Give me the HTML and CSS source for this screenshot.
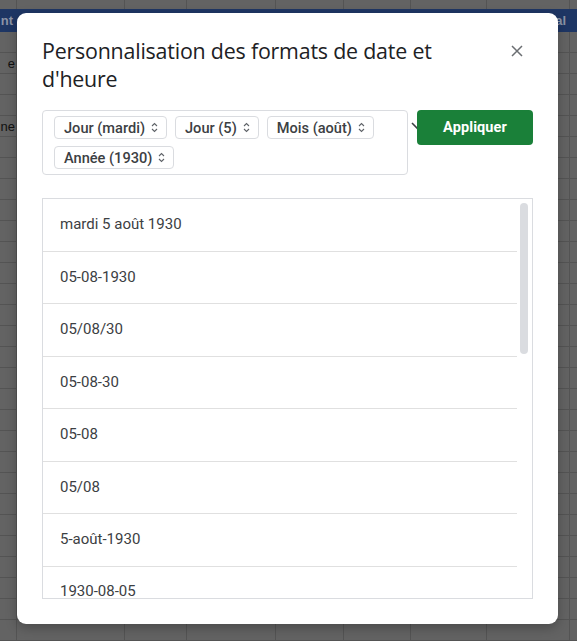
FILE: index.html
```html
<!DOCTYPE html>
<html lang="fr">
<head>
<meta charset="utf-8">
<title>Formats de date et d'heure</title>
<link rel="stylesheet" href="styles.css">
</head>
<body>
<div class="sheet">
  <div class="sheet-top"></div>
  <div class="sheet-head">
    <span class="cell-a head-text">nt</span>
    <span class="cell-total head-text">Total</span>
  </div>
  <div class="sheet-body">
    <div class="row"></div>
    <div class="row"><span class="cell-a">e</span></div>
    <div class="row"></div>
    <div class="row"></div>
    <div class="row"><span class="cell-a">ne</span></div>
    <div class="row"></div><div class="row"></div><div class="row"></div><div class="row"></div><div class="row"></div>
    <div class="row"></div><div class="row"></div><div class="row"></div><div class="row"></div><div class="row"></div>
    <div class="row"></div><div class="row"></div><div class="row"></div><div class="row"></div><div class="row"></div>
    <div class="row"></div><div class="row"></div><div class="row"></div><div class="row"></div><div class="row"></div>
    <div class="row"></div><div class="row"></div><div class="row"></div><div class="row"></div><div class="row"></div>
  </div>
</div>

<div class="modal" role="dialog" aria-label="Personnalisation des formats de date et d'heure">
  <div class="modal-header">
    <h1 class="modal-title">Personnalisation des formats de date et d'heure</h1>
    <button class="close-btn" aria-label="Fermer">
      <svg width="12" height="12" viewBox="0 0 12 12"><path d="M1 1 L11 11 M11 1 L1 11" stroke="#6b6e72" stroke-width="1.5" fill="none"/></svg>
    </button>
  </div>

  <div class="format-row">
    <div class="format-box">
      <span class="chip">Jour (mardi)<svg class="updown" width="7" height="11" viewBox="0 0 7 11"><path d="M1 4 L3.5 1.5 L6 4 M1 7 L3.5 9.5 L6 7" stroke="#5f6368" stroke-width="1.1" fill="none"/></svg></span>
      <span class="chip">Jour (5)<svg class="updown" width="7" height="11" viewBox="0 0 7 11"><path d="M1 4 L3.5 1.5 L6 4 M1 7 L3.5 9.5 L6 7" stroke="#5f6368" stroke-width="1.1" fill="none"/></svg></span>
      <span class="chip">Mois (août)<svg class="updown" width="7" height="11" viewBox="0 0 7 11"><path d="M1 4 L3.5 1.5 L6 4 M1 7 L3.5 9.5 L6 7" stroke="#5f6368" stroke-width="1.1" fill="none"/></svg></span>
      <span class="chip">Année (1930)<svg class="updown" width="7" height="11" viewBox="0 0 7 11"><path d="M1 4 L3.5 1.5 L6 4 M1 7 L3.5 9.5 L6 7" stroke="#5f6368" stroke-width="1.1" fill="none"/></svg></span>
    </div>
    <svg class="box-caret" width="12" height="8" viewBox="0 0 12 8"><path d="M1 1 L6 6 L11 1" stroke="#3c4043" stroke-width="1.6" fill="none"/></svg>
    <button class="apply-btn">Appliquer</button>
  </div>

  <div class="format-list">
    <ul class="items">
      <li class="item">mardi 5 août 1930</li>
      <li class="item">05-08-1930</li>
      <li class="item">05/08/30</li>
      <li class="item">05-08-30</li>
      <li class="item">05-08</li>
      <li class="item">05/08</li>
      <li class="item">5-août-1930</li>
      <li class="item">1930-08-05</li>
    </ul>
    <div class="scroll-track"><div class="scroll-thumb"></div></div>
  </div>
</div>
</body>
</html>
```

FILE: styles.css
```css
* { box-sizing: border-box; }

html, body {
  margin: 0;
  padding: 0;
  width: 577px;
  height: 641px;
  overflow: hidden;
}

body {
  background: #636363;
  font-family: Roboto, "Liberation Sans", Arial, sans-serif;
  position: relative;
}

/* ---------- background spreadsheet (dimmed) ---------- */
.sheet {
  width: 577px;
  height: 641px;
  display: flex;
  flex-direction: column;
  font-family: "Liberation Sans", Arial, sans-serif;
  font-size: 13px;
  --cols:
    linear-gradient(#545454, #545454) 16px 0 / 1px 100% no-repeat,
    linear-gradient(#545454, #545454) 124px 0 / 1px 100% no-repeat,
    linear-gradient(#545454, #545454) 186px 0 / 1px 100% no-repeat,
    linear-gradient(#545454, #545454) 275px 0 / 1px 100% no-repeat,
    linear-gradient(#545454, #545454) 343px 0 / 1px 100% no-repeat,
    linear-gradient(#545454, #545454) 410px 0 / 1px 100% no-repeat,
    linear-gradient(#545454, #545454) 486px 0 / 1px 100% no-repeat,
    linear-gradient(#545454, #545454) 569px 0 / 1px 100% no-repeat;
}

.sheet-top {
  height: 9px;
  flex: none;
  background: var(--cols), #636363;
}

.sheet-head {
  height: 23px;
  flex: none;
  background: #1e3664;
  display: flex;
  align-items: center;
}

.head-text {
  font-weight: bold;
  color: #8b94a6;
}

.cell-a {
  width: 15px;
  flex: none;
  text-align: right;
  white-space: nowrap;
  color: #111;
  font-size: 13px;
}

.sheet-head .cell-a { color: #8b94a6; width: 13px; }

.cell-total {
  margin-left: auto;
  margin-right: 11px;
}

.sheet-body {
  flex: 1;
  display: flex;
  flex-direction: column;
}

.row {
  height: 21px;
  flex: none;
  border-bottom: 1px solid #545454;
  background: var(--cols), #636363;
  display: flex;
  align-items: center;
}

/* ---------- modal ---------- */
.modal {
  position: absolute;
  left: 17px;
  top: 13px;
  width: 541px;
  height: 611px;
  background: #fff;
  border-radius: 9px;
  padding: 24px 25px 25px 25px;
  display: flex;
  flex-direction: column;
  box-shadow: 0 4px 12px rgba(0,0,0,0.25);
}

.modal-header {
  display: flex;
  align-items: flex-start;
  justify-content: space-between;
}

.modal-title {
  margin: 0;
  width: 440px;
  font-family: "Open Sans", Roboto, sans-serif;
  font-weight: 400;
  font-size: 21.4px;
  line-height: 28px;
  color: #202124;
  letter-spacing: -0.2px;
}

.close-btn {
  border: 0;
  background: none;
  padding: 0;
  margin: 8px 10px 0 0;
  width: 12px;
  height: 12px;
  display: flex;
}

.format-row {
  position: relative;
  display: flex;
  align-items: flex-start;
  gap: 9px;
  margin-top: 17px;
}

.format-box {
  width: 366px;
  border: 1px solid #dadce0;
  border-radius: 4px;
  padding: 5px 11px;
  display: flex;
  flex-wrap: wrap;
  gap: 7px 8px;
}

.chip {
  height: 23px;
  display: inline-flex;
  align-items: center;
  gap: 6px;
  padding: 0 8px 0 9px;
  border: 1px solid #dadce0;
  border-radius: 4px;
  font-size: 14.6px;
  font-weight: 500;
  color: #3c4043;
  white-space: nowrap;
}

.updown { flex: none; }

.box-caret {
  position: absolute;
  left: 369px;
  top: 12px;
}

.apply-btn {
  position: relative;
  width: 116px;
  height: 35px;
  border: 0;
  border-radius: 4px;
  background: #1a8039;
  color: #fff;
  font-family: Roboto, sans-serif;
  font-size: 14.5px;
  font-weight: 700;
  letter-spacing: 0.1px;
  padding: 0;
}

.format-list {
  margin-top: 23px;
  height: 401px;
  border: 1px solid #dadce0;
  display: flex;
  overflow: hidden;
}

.items {
  list-style: none;
  margin: 0;
  padding: 0;
  flex: 1;
  overflow: hidden;
}

.item {
  height: 52.5px;
  border-bottom: 1px solid #e0e0e0;
  padding-left: 17px;
  padding-bottom: 1px;
  display: flex;
  align-items: center;
  font-size: 15px;
  color: #3c4043;
}

.item:last-child {
  height: auto;
  border-bottom: 0;
  align-items: flex-start;
  padding-top: 16px;
  padding-bottom: 0;
  line-height: 16px;
}

.scroll-track {
  width: 15px;
  flex: none;
  padding: 4px 3px 0 3px;
}

.scroll-thumb {
  width: 8px;
  height: 151px;
  border-radius: 4px;
  background: #dadce0;
}
```
